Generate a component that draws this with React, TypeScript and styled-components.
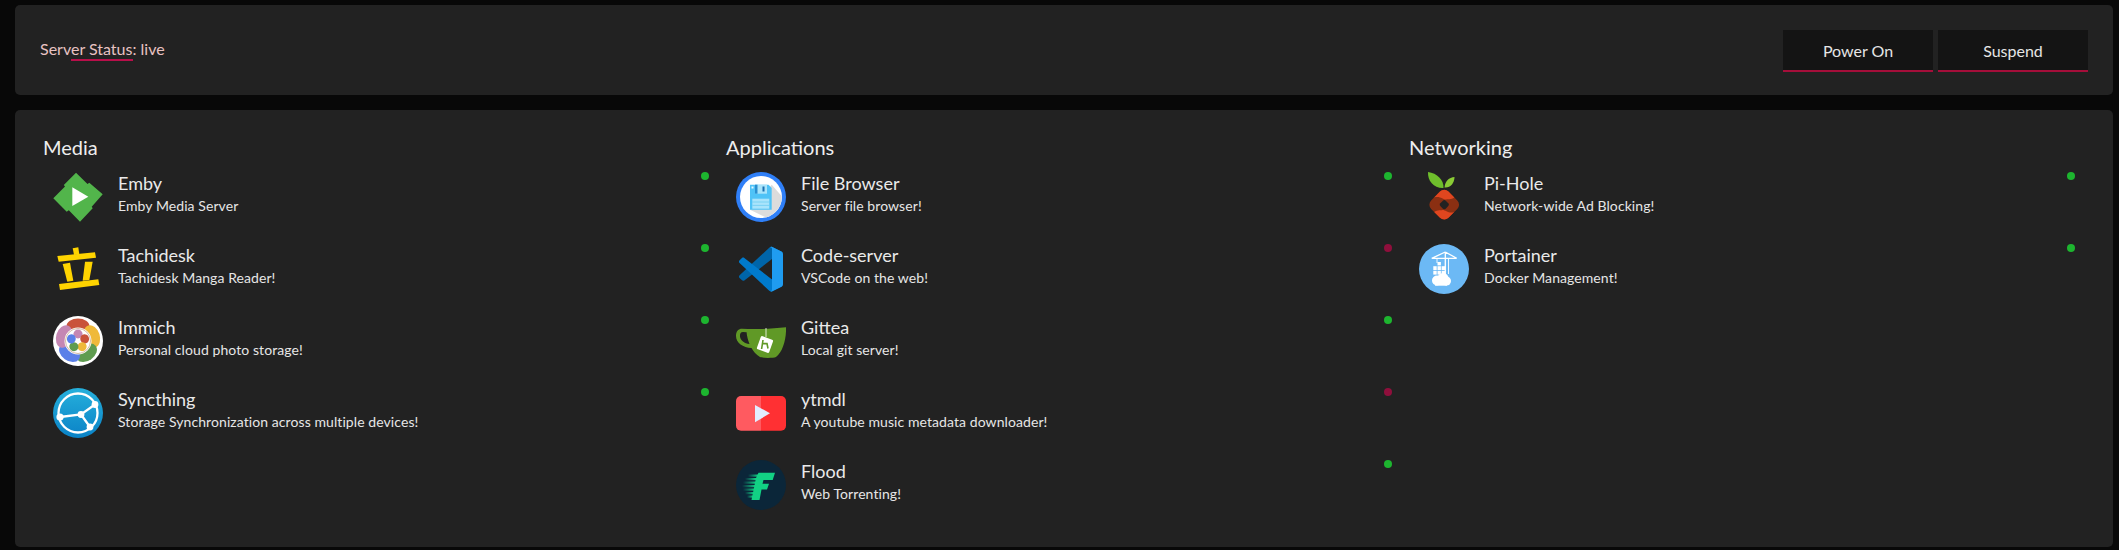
import React from "react";
import styled, { createGlobalStyle } from "styled-components";

const GlobalStyle = createGlobalStyle`
  html, body {
    margin: 0;
    background: #080808;
    font-family: "Lato", "Noto Sans", sans-serif;
    color: #eeeeee;
  }
`;

const EmbyIcon = () => (
  <svg width="50" height="50" viewBox="0 0 50 50">
    <polygon
      fill="#52b54b"
      points="23,0.7 34.5,12 36.3,10.7 49.7,22.3 38.7,34.7 39.7,36.3 27,49.7 15.8,38.2 13.7,39.7 0.3,26.3 12,14.5 10.8,13"
    />
    <polygon fill="#fff" points="19.3,15.3 35.3,24.7 19.3,34" />
  </svg>
);

const TachideskIcon = () => (
  <svg width="50" height="50" viewBox="0 0 50 50" fill="#ffd400">
    <polygon points="19.7,4.3 25.3,3.3 26.3,10.3 21,11" />
    <polygon points="4.3,12 42,8.3 43,13.7 5.7,17.7" />
    <polygon points="9.7,20 17,18.7 20.3,36.7 14.3,37.7" />
    <polygon points="32,17.7 39.7,17.7 36.3,36 29.7,36.7" />
    <polygon points="6,40 45.3,35.3 46.3,41 7,46" />
  </svg>
);

const immichPetals = [
  { color: "#c9533a", angle: 0 },
  { color: "#efb93a", angle: 72 },
  { color: "#5f9c4f", angle: 144 },
  { color: "#5b80e8", angle: 216 },
  { color: "#c587b3", angle: 288 },
];

const ImmichIcon = () => (
  <svg width="50" height="50" viewBox="0 0 50 50">
    <circle cx="25" cy="25" r="25" fill="#fff" />
    {immichPetals.map((p) => (
      <ellipse key={p.angle} cx="25" cy="10.5" rx="11.5" ry="8" fill={p.color} transform={`rotate(${p.angle} 25 25)`} />
    ))}
    <circle cx="25" cy="25" r="13.5" fill="#fff" />
    <circle cx="25" cy="25" r="12.5" fill="none" stroke="#c9a98c" strokeWidth="0.8" />
    {immichPetals.map((p) => (
      <ellipse
        key={p.angle}
        cx="25"
        cy="18"
        rx="4.6"
        ry="4.4"
        fill={immichPetals[(p.angle / 72 + 4) % 5].color}
        transform={`rotate(${p.angle} 25 25)`}
      />
    ))}
    <circle cx="25" cy="25" r="1.8" fill="#fff" />
  </svg>
);

const SyncthingIcon = () => (
  <svg width="50" height="50" viewBox="0 0 50 50">
    <defs>
      <linearGradient id="syncBg" x1="0" y1="0" x2="0" y2="1">
        <stop offset="0" stopColor="#26b0dc" />
        <stop offset="1" stopColor="#0a82c6" />
      </linearGradient>
    </defs>
    <circle cx="25" cy="25" r="25" fill="url(#syncBg)" />
    <g stroke="#fff" strokeWidth="2.3" fill="none">
      <circle cx="25" cy="25" r="19.5" />
      <path d="M7 29 L28 26.5 L42 16.5 M28 26.5 L37 39" />
    </g>
    <g fill="#fff">
      <circle cx="7" cy="29" r="3.6" />
      <circle cx="28" cy="26.5" r="3.4" />
      <circle cx="42" cy="16.5" r="3.4" />
      <circle cx="37" cy="39" r="3.4" />
    </g>
  </svg>
);

const FileBrowserIcon = () => (
  <svg width="50" height="50" viewBox="0 0 50 50">
    <circle cx="25" cy="25" r="25" fill="#2f7ff7" />
    <circle cx="25" cy="25" r="21" fill="#fff" />
    <path d="M35.7 12.7 L45.6 24 A21 21 0 0 1 30 45.4 L14 37.7 Z" fill="#dcdcdc" />
    <path d="M14 12.7 H32.5 L35.7 16 V37.7 H14 Z" fill="#4fc3f7" />
    <rect x="19" y="12.7" width="12" height="9" fill="#a9e4fb" />
    <rect x="19" y="12.7" width="2.5" height="9" fill="#2a8fd0" />
    <rect x="26.5" y="14.5" width="2" height="5" fill="#1b6fb0" />
    <rect x="15.5" y="14.5" width="2" height="2" fill="#e8f8ff" />
    <rect x="16.3" y="26.7" width="17" height="10" fill="#a9e4fb" />
    <path d="M16.3 30 H33.3 M16.3 33.4 H33.3" stroke="#6fcdf2" strokeWidth="0.8" />
  </svg>
);

const CodeServerIcon = () => (
  <svg width="50" height="50" viewBox="0 0 50 50">
    <g transform="translate(3 2.7) scale(0.44 0.45)">
      <path
        fill="#0065A9"
        d="M96.4614 10.7962L75.8569 0.875542C73.4719 -0.272773 70.6217 0.211611 68.75 2.08333L1.29858 63.5832C-0.515693 65.2373 -0.513607 68.0937 1.30308 69.7452L6.81272 74.754C8.29793 76.1042 10.5347 76.2036 12.1338 74.9905L93.3609 13.3699C96.086 11.3026 100 13.2462 100 16.6667V16.4275C100 14.0265 98.6246 11.8378 96.4614 10.7962Z"
      />
      <path
        fill="#007ACC"
        d="M96.4614 89.2038L75.8569 99.1245C73.4719 100.273 70.6217 99.7884 68.75 97.9167L1.29858 36.4168C-0.515693 34.7627 -0.513607 31.9063 1.30308 30.2548L6.81272 25.246C8.29793 23.8958 10.5347 23.7964 12.1338 25.0095L93.3609 86.6301C96.086 88.6974 100 86.7538 100 83.3333V83.5725C100 85.9735 98.6246 88.1622 96.4614 89.2038Z"
      />
      <path
        fill="#1F9CF0"
        d="M75.8578 99.1263C73.4721 100.274 70.6219 99.789 68.75 97.9167C71.0564 100.223 75 98.5895 75 95.3278V4.67213C75 1.41039 71.0564 -0.223106 68.75 2.08329C70.6219 0.211108 73.4721 -0.273666 75.8578 0.873763L96.4587 10.7807C98.6234 11.8217 100 14.0112 100 16.4132V83.5871C100 85.9891 98.6234 88.1786 96.4587 89.2196L75.8578 99.1263Z"
      />
    </g>
  </svg>
);

const GiteaIcon = () => (
  <svg width="50" height="50" viewBox="0 0 50 50">
    <path
      fillRule="evenodd"
      fill="#609926"
      d="M6 12.7 C18 13.5 35 13 50 11.3 C50.5 22 47 36 40 41 C37 42.2 27 42.2 24 41 C20 38.5 17 35 15.5 32 C7 31.5 0 27 0 20 C0 15 2.5 12.7 6 12.7 Z M7 16 C4.5 16 3.8 18 4 20.5 C4.4 24.5 8.5 27.5 13.5 28 C12 24 10.8 20 10.6 16.3 Z"
    />
    <path d="M30 12 V21" stroke="#fff" strokeWidth="0.8" />
    <rect x="22.5" y="21.5" width="13" height="14" rx="1.5" fill="#fff" transform="rotate(20 29 28.5)" />
    <path d="M27 24 L25.6 33 M26.4 27.6 L31 27.6 L32 32.5" stroke="#609926" strokeWidth="1.6" fill="none" />
  </svg>
);

const YtmdlIcon = () => (
  <svg width="50" height="50" viewBox="0 0 50 50">
    <path d="M25 8 H5 A5 5 0 0 0 0 13 V37.7 A5 5 0 0 0 5 42.7 H25 Z" fill="#ff5a60" />
    <path d="M25 8 H45 A5 5 0 0 1 50 13 V37.7 A5 5 0 0 1 45 42.7 H25 Z" fill="#ff3033" />
    <polygon points="19,17 34,25.3 19,34.3" fill="#e2edff" />
  </svg>
);

const FloodIcon = () => (
  <svg width="50" height="50" viewBox="0 0 50 50">
    <defs>
      <linearGradient id="floodSpeed" x1="0" y1="0" x2="1" y2="0">
        <stop offset="0" stopColor="#12c98a" stopOpacity="0" />
        <stop offset="1" stopColor="#12d184" />
      </linearGradient>
    </defs>
    <circle cx="25" cy="25" r="25" fill="#0b2639" />
    <polygon points="22.5,12.7 39,12.7 36.7,20 27.5,20 26.5,23.8 33,23.8 31,29.5 25.5,29.5 23.5,40 15.5,40 20,18" fill="#12d184" />
    <g fill="url(#floodSpeed)">
      <rect x="12" y="14.5" width="10" height="2.2" />
      <rect x="9" y="18" width="11" height="2.2" />
      <rect x="7" y="21.5" width="13" height="2.2" />
      <rect x="6" y="25" width="14" height="2.2" />
      <rect x="7" y="28.5" width="12" height="2.2" />
      <rect x="9" y="32" width="9" height="2.2" />
      <rect x="11" y="35.5" width="6" height="2.2" />
    </g>
  </svg>
);

const PiHoleIcon = () => (
  <svg width="50" height="50" viewBox="0 0 50 50">
    <defs>
      <clipPath id="piDiamond">
        <rect x="13" y="20.5" width="24.5" height="24.5" rx="6" transform="rotate(45 25.3 32.7)" />
      </clipPath>
    </defs>
    <path d="M24.5 16 C25 8 18 1 9 0 C8.5 9 15 16.5 24.5 16 Z" fill="#6fbf2c" />
    <path d="M25.5 15.5 C26 9 30 5.5 35.5 5 C35.5 11 31.5 16 25.5 15.5 Z" fill="#8acb35" />
    <g clipPath="url(#piDiamond)">
      <rect x="5" y="12" width="42" height="42" fill="#8b2f12" />
      <path
        d="M12 26 L25.3 12 L37 24 C33 28 30 27 27 27.5 C24 27.5 22 24.5 17 25 C15 25.2 13.5 25.5 12 26 Z"
        fill="#e0461f"
      />
      <path
        d="M12 26 L25.3 12 L37 24 C33 28 30 27 27 27.5 C24 27.5 22 24.5 17 25 C15 25.2 13.5 25.5 12 26 Z"
        fill="#e0461f"
        transform="rotate(180 25.3 32.7)"
      />
    </g>
    <rect x="21.5" y="28.9" width="7.6" height="7.6" rx="2" fill="#222" transform="rotate(45 25.3 32.7)" />
  </svg>
);

const PortainerIcon = () => (
  <svg width="50" height="50" viewBox="0 0 50 50">
    <circle cx="25" cy="25" r="25" fill="#6cb9f5" />
    <g stroke="#fff" strokeWidth="1.3" fill="none">
      <path d="M26.3 8 V32 M12.7 14.3 H37.7 M26.3 8 L12.7 14.3 M26.3 8 L37.7 14.3" />
      <path d="M18 14.3 V19 M29.5 14.3 V30" strokeWidth="0.9" />
    </g>
    <g fill="#fff">
      <rect x="18.5" y="18" width="3.4" height="3.4" />
      <rect x="14.3" y="22.2" width="3.4" height="3.8" />
      <rect x="18.5" y="22.2" width="3.4" height="3.8" />
      <rect x="22.6" y="22.2" width="3.4" height="3.8" />
      <rect x="14.3" y="26.8" width="3.4" height="3.8" />
      <rect x="18.5" y="26.8" width="3.4" height="3.8" />
      <rect x="22.6" y="26.8" width="3.4" height="3.8" />
      <circle cx="18" cy="36.5" r="5" />
      <circle cx="24" cy="34.5" r="5.5" />
      <circle cx="27.5" cy="37" r="4.5" />
      <rect x="16" y="37" width="12" height="4.7" />
    </g>
  </svg>
);

type Service = { name: string; desc: string; icon: React.ReactNode; up: boolean };

const groups: { title: string; items: Service[] }[] = [
  {
    title: "Media",
    items: [
      { name: "Emby", desc: "Emby Media Server", icon: <EmbyIcon />, up: true },
      { name: "Tachidesk", desc: "Tachidesk Manga Reader!", icon: <TachideskIcon />, up: true },
      { name: "Immich", desc: "Personal cloud photo storage!", icon: <ImmichIcon />, up: true },
      { name: "Syncthing", desc: "Storage Synchronization across multiple devices!", icon: <SyncthingIcon />, up: true },
    ],
  },
  {
    title: "Applications",
    items: [
      { name: "File Browser", desc: "Server file browser!", icon: <FileBrowserIcon />, up: true },
      { name: "Code-server", desc: "VSCode on the web!", icon: <CodeServerIcon />, up: false },
      { name: "Gittea", desc: "Local git server!", icon: <GiteaIcon />, up: true },
      { name: "ytmdl", desc: "A youtube music metadata downloader!", icon: <YtmdlIcon />, up: false },
      { name: "Flood", desc: "Web Torrenting!", icon: <FloodIcon />, up: true },
    ],
  },
  {
    title: "Networking",
    items: [
      { name: "Pi-Hole", desc: "Network-wide Ad Blocking!", icon: <PiHoleIcon />, up: true },
      { name: "Portainer", desc: "Docker Management!", icon: <PortainerIcon />, up: true },
    ],
  },
];

export default function App() {
  return (
    <>
      <GlobalStyle />
      <Page>
        <StatusBar>
          <StatusText>Server Status: live</StatusText>
          <Actions>
            <ActionButton>Power On</ActionButton>
            <ActionButton>Suspend</ActionButton>
          </Actions>
        </StatusBar>
        <Board>
          {groups.map((group) => (
            <Group key={group.title}>
              <GroupTitle>{group.title}</GroupTitle>
              {group.items.map((item) => (
                <ServiceRow key={item.name}>
                  <IconBox>{item.icon}</IconBox>
                  <ServiceText>
                    <ServiceName>{item.name}</ServiceName>
                    <ServiceDesc>{item.desc}</ServiceDesc>
                  </ServiceText>
                  <Dot $up={item.up} />
                </ServiceRow>
              ))}
            </Group>
          ))}
        </Board>
      </Page>
    </>
  );
}

const Page = styled.div`
  display: flex;
  flex-direction: column;
  gap: 15px;
  padding: 5px 6px 3px 15px;
`;

const StatusBar = styled.header`
  display: flex;
  align-items: center;
  justify-content: space-between;
  height: 90px;
  padding: 0 25px;
  box-sizing: border-box;
  background: #222222;
  border-radius: 5px;
`;

const StatusText = styled.span`
  position: relative;
  margin-bottom: 2px;
  font-size: 16px;
  line-height: 22px;
  color: #e8c2c2;

  &::after {
    content: "";
    position: absolute;
    left: 31px;
    bottom: -1px;
    width: 62px;
    height: 2px;
    background: #b80f4a;
  }
`;

const Actions = styled.div`
  display: flex;
  gap: 5px;
  margin-top: 2px;
`;

const ActionButton = styled.button`
  width: 150px;
  height: 42px;
  padding: 0;
  background: #141414;
  border: 0;
  border-bottom: 2px solid #a50e3a;
  color: #e6e6e6;
  font-family: inherit;
  font-size: 16px;
`;

const Board = styled.main`
  display: grid;
  grid-template-columns: repeat(3, 1fr);
  padding: 23px 21px 15px 28px;
  background: #222222;
  border-radius: 5px;
`;

const Group = styled.section`
  display: flex;
  flex-direction: column;
`;

const GroupTitle = styled.h2`
  margin: 0 0 11px;
  font-size: 20px;
  line-height: 28px;
  font-weight: 400;
  color: #eeeeee;
`;

const ServiceRow = styled.div`
  display: flex;
  height: 72px;
  padding: 0 17px 0 10px;
`;

const IconBox = styled.div`
  width: 50px;
  height: 50px;
  flex: none;
  margin-right: 15px;

  svg {
    display: block;
  }
`;

const ServiceText = styled.div`
  flex: 1;
`;

const ServiceName = styled.div`
  margin: -1px 0 1px;
  font-size: 18px;
  line-height: 24px;
  color: #eaeaea;
`;

const ServiceDesc = styled.div`
  font-size: 14px;
  line-height: 20px;
  letter-spacing: 0.08px;
  color: #e6e6e6;
`;

const Dot = styled.span<{ $up: boolean }>`
  width: 8px;
  height: 8px;
  flex: none;
  border-radius: 50%;
  background: ${({ $up }) => ($up ? "#1db52f" : "#8f0f3c")};
`;
